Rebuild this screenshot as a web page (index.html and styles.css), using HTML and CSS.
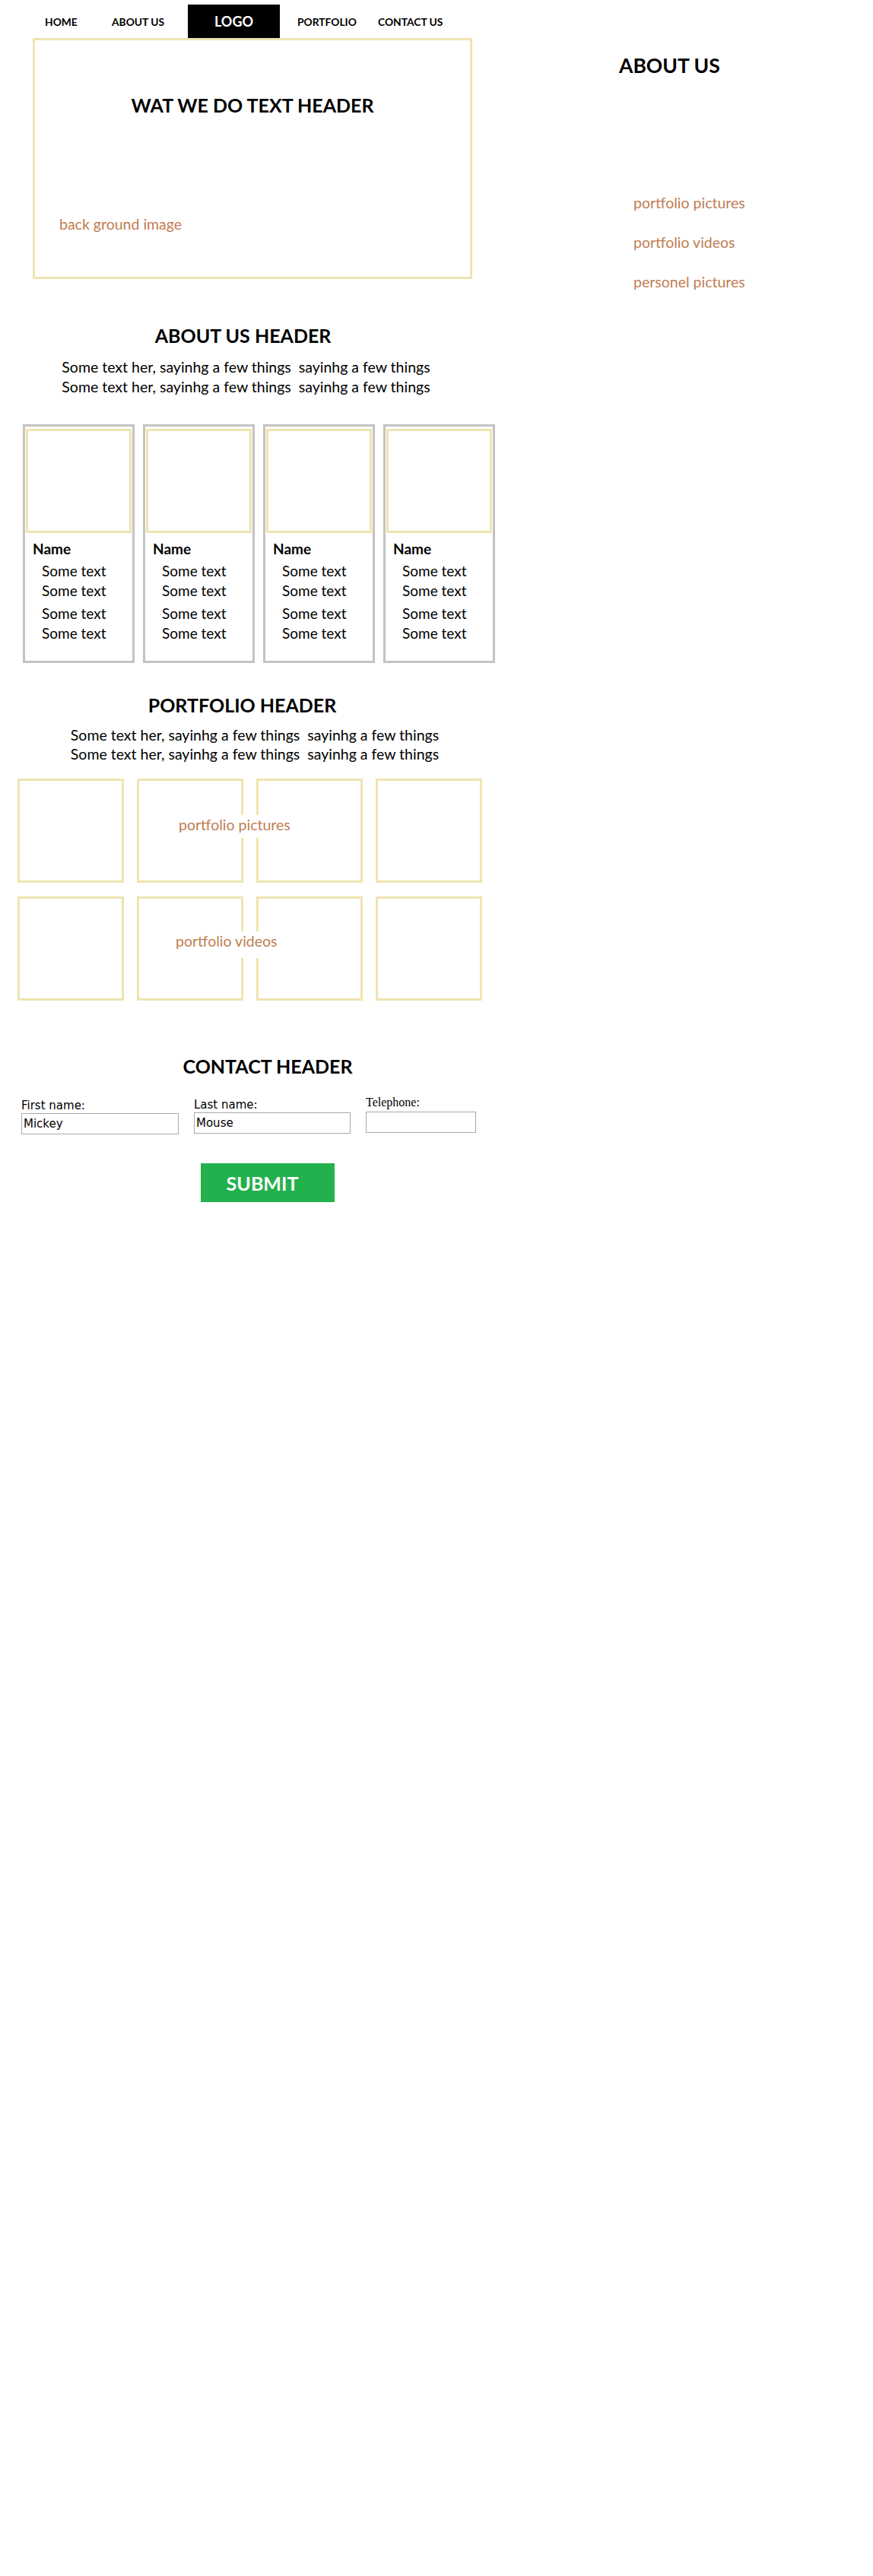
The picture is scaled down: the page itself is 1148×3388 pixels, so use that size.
FILE: index.html
```html
<!DOCTYPE html>
<html lang="en">
<head>
<meta charset="utf-8">
<title>Mockup</title>
<link rel="stylesheet" href="styles.css">
</head>
<body>
<div class="page">
  <div class="main">
    <nav class="nav">
      <a class="nav-item w-home">HOME</a>
      <a class="nav-item w-about">ABOUT US</a>
      <a class="nav-item nav-logo">LOGO</a>
      <a class="nav-item w-portfolio">PORTFOLIO</a>
      <a class="nav-item">CONTACT US</a>
    </nav>

    <section class="hero">
      <h1 class="hero-title">WAT WE DO TEXT HEADER</h1>
      <p class="hero-bg note">back ground image</p>
    </section>

    <section class="about">
      <h2 class="sec-title about-title">ABOUT US HEADER</h2>
      <p class="sec-text about-text">Some text her, sayinhg a few things&nbsp; sayinhg a few things<br>Some text her, sayinhg a few things&nbsp; sayinhg a few things</p>
      <div class="cards">
        <div class="card">
          <div class="card-img"></div>
          <div class="card-name">Name</div>
          <div class="card-lines"><p>Some text</p><p>Some text</p></div>
          <div class="card-lines second"><p>Some text</p><p>Some text</p></div>
        </div>
        <div class="card">
          <div class="card-img"></div>
          <div class="card-name">Name</div>
          <div class="card-lines"><p>Some text</p><p>Some text</p></div>
          <div class="card-lines second"><p>Some text</p><p>Some text</p></div>
        </div>
        <div class="card">
          <div class="card-img"></div>
          <div class="card-name">Name</div>
          <div class="card-lines"><p>Some text</p><p>Some text</p></div>
          <div class="card-lines second"><p>Some text</p><p>Some text</p></div>
        </div>
        <div class="card">
          <div class="card-img"></div>
          <div class="card-name">Name</div>
          <div class="card-lines"><p>Some text</p><p>Some text</p></div>
          <div class="card-lines second"><p>Some text</p><p>Some text</p></div>
        </div>
      </div>
    </section>

    <section class="portfolio">
      <h2 class="sec-title portfolio-title">PORTFOLIO HEADER</h2>
      <p class="sec-text portfolio-text">Some text her, sayinhg a few things&nbsp; sayinhg a few things<br>Some text her, sayinhg a few things&nbsp; sayinhg a few things</p>
      <div class="gallery">
        <div class="tile"></div><div class="tile"></div><div class="tile"></div><div class="tile"></div>
        <div class="tile"></div><div class="tile"></div><div class="tile"></div><div class="tile"></div>
        <span class="gallery-label note label-pictures">portfolio pictures</span>
        <span class="gallery-label note label-videos">portfolio videos</span>
      </div>
    </section>

    <section class="contact">
      <h2 class="sec-title contact-title">CONTACT HEADER</h2>
      <form class="form">
        <div class="form-row">
          <div class="field field-first">
            <label class="field-label" for="fname">First name:</label>
            <input class="field-input w-first" id="fname" type="text" value="Mickey">
          </div>
          <div class="field field-last">
            <label class="field-label" for="lname">Last name:</label>
            <input class="field-input w-last" id="lname" type="text" value="Mouse">
          </div>
          <div class="field field-tel">
            <label class="field-label serif" for="tel">Telephone:</label>
            <input class="field-input w-tel" id="tel" type="text" value="">
          </div>
        </div>
        <button class="submit" type="button">SUBMIT</button>
      </form>
    </section>
  </div>

  <aside class="side">
    <h2 class="side-title">ABOUT US</h2>
    <ul class="side-links">
      <li class="note">portfolio pictures</li>
      <li class="note">portfolio videos</li>
      <li class="note">personel pictures</li>
    </ul>
  </aside>
</div>
</body>
</html>
```

FILE: styles.css
```css
* { box-sizing: border-box; }

html, body {
  margin: 0;
  padding: 0;
  background: #ffffff;
}

body {
  font-family: Lato, "Open Sans", sans-serif;
  color: #000000;
  min-height: 3388px;
}

.page {
  display: flex;
  align-items: flex-start;
  width: 1148px;
}

.main {
  flex: none;
  width: 660px;
}

/* ---------- nav ---------- */
.nav {
  display: flex;
  align-items: stretch;
  height: 50px;
  padding: 6px 0 0 59px;
}

.nav-item {
  display: flex;
  align-items: center;
  font-size: 13.8px;
  font-weight: 700;
  color: #000000;
  text-decoration: none;
  white-space: nowrap;
}

.w-home { width: 88px; }
.w-about { width: 100px; }
.w-portfolio { width: 106px; margin-left: 23px; }

.nav-logo {
  width: 121px;
  justify-content: center;
  background: #000000;
  color: #ffffff;
  font-size: 18px;
}

/* ---------- shared ---------- */
.note {
  color: #bf7d52;
  font-size: 19.5px;
  line-height: 22px;
}

.sec-title {
  margin: 0;
  font-size: 25px;
  line-height: 30px;
  font-weight: 700;
  text-align: center;
}

.sec-text {
  margin: 0;
  font-size: 19.5px;
  text-align: center;
  white-space: nowrap;
}

/* ---------- hero ---------- */
.hero {
  margin-left: 43px;
  width: 578px;
  height: 317px;
  border: 3px solid #efe4b0;
  padding-top: 70px;
}

.hero-title {
  margin: 0;
  font-size: 25px;
  line-height: 30px;
  font-weight: 700;
  text-align: center;
}

.hero-bg {
  margin: 131px 0 0;
  padding-left: 32px;
}

/* ---------- about ---------- */
.about-title {
  width: 639px;
  margin-top: 59px;
}

.about-text {
  width: 647px;
  margin-top: 14px;
  line-height: 26px;
}

.cards {
  display: flex;
  gap: 11px;
  margin: 36px 0 0 30px;
}

.card {
  width: 147px;
  height: 314px;
  border: 3px solid #c3c3c3;
}

.card-img {
  height: 137px;
  margin: 3px 1px 0 1px;
  border: 3px solid #efe4b0;
}

.card-name {
  margin: 10px 0 0 10px;
  font-size: 19px;
  line-height: 22px;
  font-weight: 700;
}

.card-lines {
  margin: 5px 0 0 22px;
}

.card-lines.second {
  margin-top: 4px;
}

.card-lines p {
  margin: 0;
  font-size: 19px;
  line-height: 26px;
}

/* ---------- portfolio ---------- */
.portfolio-title {
  width: 637px;
  margin-top: 40px;
}

.portfolio-text {
  width: 670px;
  margin-top: 12px;
  line-height: 25px;
}

.gallery {
  position: relative;
  display: grid;
  grid-template-columns: repeat(4, 140px);
  grid-auto-rows: 137px;
  column-gap: 17px;
  row-gap: 18px;
  margin: 20px 0 0 23px;
  width: max-content;
}

.tile {
  border: 3px solid #efe4b0;
}

.gallery-label {
  position: absolute;
  background: #ffffff;
  padding: 0 3px;
  line-height: 26px;
  white-space: nowrap;
}

.label-pictures {
  left: 209px;
  top: 48px;
  padding-bottom: 4px;
}

.label-videos {
  left: 205px;
  top: 201px;
  padding-bottom: 9px;
}

/* ---------- contact ---------- */
.contact-title {
  width: 704px;
  margin-top: 71px;
}

.form {
  margin: 0;
}

.form-row {
  display: flex;
  align-items: flex-start;
  gap: 20px;
  margin-top: 28px;
  padding-left: 28px;
}

.field {
  display: flex;
  flex-direction: column;
}

.field-last { margin-top: -1px; }
.field-tel { margin-top: -4px; }

.field-label {
  font-family: "DejaVu Sans", Verdana, sans-serif;
  font-size: 15px;
  line-height: 18px;
  color: #000000;
  margin-bottom: 1px;
}

.field-label.serif {
  font-family: "Liberation Serif", "Times New Roman", serif;
  font-size: 16px;
  margin-bottom: 3px;
}

.field-input {
  height: 28px;
  margin: 0;
  padding: 0 2px;
  border: 1px solid #a9a9a9;
  border-radius: 0;
  background: #ffffff;
  font-family: "DejaVu Sans", Verdana, sans-serif;
  font-size: 15px;
  color: #000000;
  outline: none;
}

.w-first { width: 207px; }
.w-last { width: 206px; }
.w-tel { width: 145px; }

.submit {
  display: block;
  width: 176px;
  height: 51px;
  margin: 38px 0 0 264px;
  padding: 0 14px 0 0;
  border: none;
  border-radius: 0;
  background: #22b14c;
  color: #ffffff;
  font-family: Lato, "Open Sans", sans-serif;
  font-size: 25px;
  font-weight: 700;
  text-align: center;
}

/* ---------- sidebar ---------- */
.side {
  flex: 1;
  padding: 69px 0 0 154px;
}

.side-title {
  margin: 0;
  font-size: 26.5px;
  line-height: 34px;
  font-weight: 700;
}

.side-links {
  list-style: none;
  margin: 153px 0 0;
  padding: 0 0 0 19px;
}

.side-links li + li {
  margin-top: 30px;
}
```
